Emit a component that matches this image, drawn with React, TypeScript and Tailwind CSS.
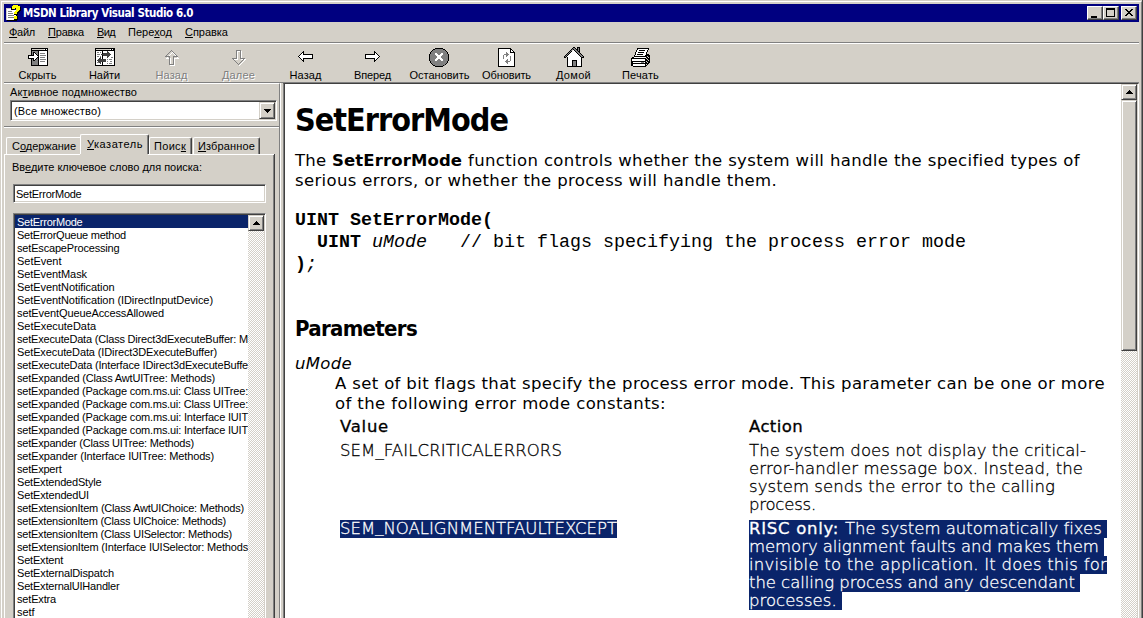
import React, { useLayoutEffect, useRef, useState } from "react";

/** Single line of text whose tracking is adjusted so that it spans `w` pixels. */
function Fit({ w, className = "", children }: { w: number; className?: string; children: React.ReactNode }) {
  const ref = useRef<HTMLSpanElement>(null);
  const [spacing, setSpacing] = useState(0);
  useLayoutEffect(() => {
    const el = ref.current;
    if (!el) return;
    el.style.letterSpacing = "0px";
    const natural = el.getBoundingClientRect().width;
    const count = (el.textContent || "").length;
    const value = (w - natural) / Math.max(1, count);
    el.style.letterSpacing = value + "px";
    setSpacing(value);
  }, [w]);
  return (
    <span ref={ref} className={"inline-block whitespace-pre " + className} style={{ letterSpacing: spacing }}>
      {children}
    </span>
  );
}

const U = ({ children }: { children: React.ReactNode }) => (
  <span className="underline decoration-1 underline-offset-1">{children}</span>
);

const raised =
  "border border-t-[#d4d0c8] border-l-[#d4d0c8] border-r-[#404040] border-b-[#404040] bg-[#d4d0c8] shadow-[inset_1px_1px_0_#fff,inset_-1px_-1px_0_#808080]";
const winButton =
  "border border-t-white border-l-white border-r-[#404040] border-b-[#404040] bg-[#d4d0c8] shadow-[inset_-1px_-1px_0_#808080]";
const sunken =
  "border border-t-[#808080] border-l-[#808080] border-r-white border-b-white bg-white shadow-[inset_1px_1px_0_#404040,inset_-1px_-1px_0_#d4d0c8]";
const track =
  "bg-[repeating-conic-gradient(#ffffff_0_25%,#d4d0c8_0_50%)] bg-[length:2px_2px]";

function Triangle({ up = false }: { up?: boolean }) {
  return (
    <svg width="7" height="4" viewBox="0 0 7 4" shapeRendering="crispEdges">
      {up ? <path d="M3 0h1v1h1v1h1v1h1v1H0V3h1V2h1V1h1z" /> : <path d="M0 0h7v1H6v1H5v1H4v1H3V3H2V2H1V1H0z" />}
    </svg>
  );
}

function Canvas({ children }: { children: React.ReactNode }) {
  return (
    <svg width="22" height="21" viewBox="0 0 22 21" shapeRendering="crispEdges" className="-mt-px mb-px block">
      {children}
    </svg>
  );
}

const arrowLeft = "M3.5 9.5l5-5v3h9v4h-9v3z";

const HideIcon = () => (
  <Canvas>
    <path d="M4 1h17v18H4z" />
    <path d="M5 4h6v14H5z" fill="#808080" />
    <path d="M12 4h8v14h-8z" fill="#fff" />
    <path d="M5 2h12v1H5z" fill="#d4d0c8" />
    <path d="M17 2h1v1h-1zM19 2h1v1h-1z" fill="#fff" />
    <path d="M13 6h5v1h-5zM13 8h6v1h-6zM13 10h5v1h-5zM13 12h6v1h-6zM13 14h5v1h-5z" fill="#808080" />
    <path d="M1.500 8.500h5v-3h1l4 4-4 4h-1v-2h-5z" fill="#fff" stroke="#000" />
  </Canvas>
);

const FindIcon = () => (
  <Canvas>
    <path d="M1 1h20v18H1z" />
    <path d="M2 4h18v14H2z" fill="#fff" />
    <path d="M2 2h14v1H2z" fill="#d4d0c8" />
    <path d="M16 2h1v1h-1zM18 2h1v1h-1z" fill="#fff" />
    <path d="M8 4h1v14H8z" />
    <path d="M3 5h2v1H3zM6 5h1v1H6zM3 7h3v1H3zM3 9h2v1H3zM6 9h1v1H6zM3 15h2v1H3zM6 16h1v1H6zM13 12h1v1h-1zM15 12h3v1h-3zM13 16h1v1h-1zM15 16h3v1h-3zM13 14h1v1h-1zM16 14h2v1h-2zM17 10h2v1h-2z" fill="#808080" />
    <path d="M9 6h4V4h1v1h1v1h1v1h1v1h-1v1h-1v1h-1v1h-1V9H9V8H7V7h2z" fill="#404040" />
    <path d="M3 13h1v-1h1v-1h1v-1h1v2h5v3H7v2H6v-1H5v-1H4v-1H3z" fill="#404040" />
  </Canvas>
);

const UpIcon = () => (
  <Canvas>
    <path d="M11.500 4.500l6 6h-4v7h-4v-7h-4z" fill="none" stroke="#fff" transform="translate(0 1)" />
    <path d="M10.500 3.500l6 6h-4v8h-4v-8h-4z" fill="none" stroke="#808080" />
  </Canvas>
);

const DownIcon = () => (
  <Canvas>
    <path d="M11.500 18.500l6-6h-4v-8h-4v8h-4z" fill="none" stroke="#fff" />
    <path d="M10.500 17.500l6-6h-4v-8h-4v8h-4z" fill="none" stroke="#808080" />
  </Canvas>
);

const LeftIcon = () => (
  <Canvas>
    <path d={arrowLeft} fill="#fff" stroke="#000" />
  </Canvas>
);

const RightIcon = () => (
  <Canvas>
    <path d={arrowLeft} fill="#fff" stroke="#000" transform="translate(21 0) scale(-1 1)" />
  </Canvas>
);

const StopIcon = () => (
  <Canvas>
    <g transform="translate(-1 1)">
      <path d="M8.500 .5h5l3 1 3 3 1 3v4l-1 3-3 3-3 1h-5l-3-1-3-3-1-3v-4l1-3 3-3z" fill="#808080" stroke="#000" />
      <path d="M7 5h2v1h1v1h2V6h1V5h2v2h-1v1h-1v2h1v1h1v2h-2v-1h-1v-1h-2v1H9v1H7v-2h1v-1h1V8H8V7H7z" fill="#fff" />
    </g>
  </Canvas>
);

const RefreshIcon = () => (
  <Canvas>
    <g transform="translate(0 1)">
      <path d="M2.500 .5h12l4 4v14h-16z" fill="#fff" stroke="#000" />
      <path d="M14.500 .5v4h4" fill="none" stroke="#000" />
      <path d="M7 7h1V6h2V4h1v1h1v1h1v1h-1v1h-1v1h-1V7H8v4H7zM14 8h1v5h-1v1h-2v2h-1v-1h-1v-1H9v-1h1v-1h1v-1h1v2h2z" fill="#808080" />
    </g>
  </Canvas>
);

const HomeIcon = () => (
  <Canvas>
    <path d="M14.500 .5h2v8h-2z" fill="#808080" stroke="#000" />
    <path d="M4 9l7-7 7 7v10H4z" fill="#fff" />
    <path d="M4 10h1v9h13v-9h1v10H4z" fill="#000" />
    <path d="M10 0h2v1h1v1h1v1h1v1h1v1h1v1h1v1h1v1h1v1h1v2h-3v-1h-1V9h-1V8h-1V7h-1V6h-1V5h-1V4h-1V3h-2v1H9v1H8v1H7v1H6v1H5v1H4v1H3v1H1V9h1V8h1V7h1V6h1V5h1V4h1V3h1V2h1V1h1z" />
    <path d="M10 1h2v1h1v1h1v1h1v1h1v1h1v1h1v1h1v1h1v1h-2V9h-1V8h-1V7h-1V6h-1V5h-1V4h-1V3h-1V2h-1v1H9v1H8v1H7v1H6v1H5v1H4v1H3v1H2V9h1V8h1V7h1V6h1V5h1V4h1V3h1V2h1z" fill="#808080" />
    <path d="M9.500 19.500v-6h4v6z" fill="#808080" stroke="#000" />
  </Canvas>
);

const PrintIcon = () => (
  <Canvas>
    <path d="M1 11h1v-1h2V9h12V7h3v1h1v8h-1v1h-1v1h-1v1h-1v1H3v-1H1z" />
    <path d="M2 12h13v2H2zM3 15h12v1H3zM3 17h12v2H3z" fill="#fff" />
    <path d="M5 10h11v1H4v-1z" fill="#fff" />
    <path d="M7 1h12v2h-1v2h-1v2h-1v3H4V8h1V5h1V3h1z" />
    <path d="M8 2h10l-3 7H5z" fill="#fff" />
    <path d="M9 3h6v1H9zM8 5h6v1H8zM7 7h6v1H7z" />
    <path d="M17 9h1v1h-1zM16 11h1v1h-1zM18 10h1v1h-1zM17 12h1v1h-1zM18 13h1v1h-1zM16 14h1v1h-1zM17 15h1v1h-1zM16 17h1v1h-1z" fill="#d4d0c8" />
    <path d="M11 15h3v1h-3z" fill="#808080" />
  </Canvas>
);

const AppIcon = () => (
  <svg width="16" height="17" viewBox="0 0 16 17" shapeRendering="crispEdges">
    <path d="M1 4h7v1h2v10H1z" fill="#fff" />
    <path d="M0 3h6v1H1v11H0z" fill="#d4d0c8" />
    <path d="M1 15h9v1H1zM10 9h1v7h-1z" fill="#000" />
    <path d="M2 6h4v1H2zM2 8h5v1H2zM2 10h6v1H2zM2 12h6v1H2z" fill="#808080" />
    <path d="M6 1h1V0h6v1h1v1h1v4h-1v1h-1v1h-1v2H8V7h1V6h1V4H8v1H5V2h1zM8 11h4v4H8z" fill="#000" />
    <path d="M7 0h5v1h2v4h-1v1h-1v1h-1v2H8V7h1V6h1V3H9v1H6V1h1zM8 11h3v3H8z" fill="#ff0" />
  </svg>
);

const tools: { label: string; w: number; icon: React.ReactNode; off?: boolean }[] = [
  { label: "Скрыть", w: 38, icon: <HideIcon /> },
  { label: "Найти", w: 31, icon: <FindIcon /> },
  { label: "Назад", w: 32, icon: <UpIcon />, off: true },
  { label: "Далее", w: 33, icon: <DownIcon />, off: true },
  { label: "Назад", w: 32, icon: <LeftIcon /> },
  { label: "Вперед", w: 37, icon: <RightIcon /> },
  { label: "Остановить", w: 60, icon: <StopIcon /> },
  { label: "Обновить", w: 49, icon: <RefreshIcon /> },
  { label: "Домой", w: 35, icon: <HomeIcon /> },
  { label: "Печать", w: 37, icon: <PrintIcon /> },
];

const keywords: [string, number][] = [
  ["SetErrorMode", 65.5],
  ["SetErrorQueue method", 109],
  ["setEscapeProcessing", 102.5],
  ["SetEvent", 44.5],
  ["SetEventMask", 70],
  ["SetEventNotification", 97.5],
  ["SetEventNotification (IDirectInputDevice)", 196],
  ["setEventQueueAccessAllowed", 147],
  ["SetExecuteData", 79],
  ["setExecuteData (Class Direct3dExecuteBuffer: M", 231],
  ["SetExecuteData (IDirect3DExecuteBuffer)", 200],
  ["setExecuteData (Interface IDirect3dExecuteBuffe", 231],
  ["setExpanded (Class AwtUITree: Methods)", 198],
  ["setExpanded (Package com.ms.ui: Class UITree:", 231],
  ["setExpanded (Package com.ms.ui: Class UITree:", 231],
  ["setExpanded (Package com.ms.ui: Interface IUIT", 231],
  ["setExpanded (Package com.ms.ui: Interface IUIT", 231],
  ["setExpander (Class UITree: Methods)", 177],
  ["setExpander (Interface IUITree: Methods)", 197],
  ["setExpert", 44.5],
  ["SetExtendedStyle", 84.5],
  ["SetExtendedUI", 72],
  ["setExtensionItem (Class AwtUIChoice: Methods)", 227],
  ["setExtensionItem (Class UIChoice: Methods)", 209],
  ["setExtensionItem (Class UISelector: Methods)", 215],
  ["setExtensionItem (Interface IUISelector: Methods", 231],
  ["SetExtent", 46],
  ["SetExternalDispatch", 97],
  ["SetExternalUIHandler", 102.5],
  ["setExtra", 39],
  ["setf", 17.5],
];

function TitleBar() {
  return (
    <div className="flex h-[18px] shrink-0 items-center bg-[#000080] pl-0.5 pr-0.5">
      <AppIcon />
      <Fit w={170} className="ml-[1px] pt-px font-['DejaVu_Sans_Condensed','DejaVu_Sans',sans-serif] text-[11.500px] font-bold leading-[17px] text-white">
        MSDN Library Visual Studio 6.0
      </Fit>
      <div className="ml-auto flex">
        <div className={"h-3.5 w-4 " + winButton}>
          <svg width="14" height="12" shapeRendering="crispEdges"><path d="M3 9h6v2H3z" /></svg>
        </div>
        <div className={"h-3.5 w-4 " + winButton}>
          <svg width="14" height="12" shapeRendering="crispEdges"><path fillRule="evenodd" d="M2 1h9v9H2zM3 3v6h7V3z" /></svg>
        </div>
        <div className={"ml-0.5 h-3.5 w-4 " + winButton}>
          <svg width="14" height="12" shapeRendering="crispEdges">
            <path d="M3 2h2v1h1v1h2V3h1V2h2v1h-1v1H9v1H8v1h1v1h1v1h1v1H9V8H8V7H6v1H5v1H3V8h1V7h1V6h1V5H5V4H4V3H3z" />
          </svg>
        </div>
      </div>
    </div>
  );
}

function MenuBar() {
  return (
    <div className="flex h-5 shrink-0 items-center gap-[13px] pl-[5px]">
      <Fit w={26}><U>Ф</U>айл</Fit>
      <Fit w={36}><U>П</U>равка</Fit>
      <Fit w={18}><U>В</U>ид</Fit>
      <Fit w={44}>Пере<U>х</U>од</Fit>
      <Fit w={43}><U>С</U>правка</Fit>
    </div>
  );
}

function Toolbar() {
  return (
    <div className="flex h-[39px] shrink-0 border-t border-t-white">
      {tools.map((t, i) => (
        <div key={i} className="flex w-[67px] flex-col items-center pt-1">
          {t.icon}
          <Fit w={t.w} className={"leading-[13px] " + (t.off ? "text-[#808080] [text-shadow:1px_1px_0_#fff]" : "")}>
            {t.label}
          </Fit>
        </div>
      ))}
    </div>
  );
}

const tabEdge =
  "flex items-center rounded-t-[2px] border-t border-l border-t-white border-l-white border-r border-r-[#404040] shadow-[inset_-1px_0_0_#808080] bg-[#d4d0c8]";

function Sidebar() {
  return (
    <div className="flex w-[276px] shrink-0 flex-col border-t border-t-white border-r border-r-[#808080]">
      <div className="h-4 shrink-0 pl-1.5 leading-4">
        <Fit w={127}>Ак<U>т</U>ивное подмножество</Fit>
      </div>
      <div className={"ml-1.5 flex h-[21px] w-[267px] shrink-0 items-center justify-between pl-[3px] pr-px " + sunken}>
        <Fit w={87} className="pt-px">(Все множество)</Fit>
        <div className={"flex h-[17px] w-4 items-center justify-center " + raised}>
          <Triangle />
        </div>
      </div>
      <div className="mt-[5px] h-0.5 shrink-0 border-t border-b border-t-[#808080] border-b-white" />
      <div className="flex h-[26px] shrink-0 items-end pl-0.5">
        <div className="flex h-[17px] w-[74px] items-center rounded-tl-[2px] border-t border-l border-t-white border-l-white pl-[5px]">
          <Fit w={64}>С<U>о</U>держание</Fit>
        </div>
        <div className={"h-[20px] w-[69px] pl-1.5 " + tabEdge}>
          <Fit w={56}><U>У</U>казатель</Fit>
        </div>
        <div className={"h-[17px] w-[43px] pl-1 " + tabEdge}>
          <Fit w={32}>Поис<U>к</U></Fit>
        </div>
        <div className={"ml-px h-[17px] w-[67px] pl-1 " + tabEdge}>
          <Fit w={57}><U>И</U>збранное</Fit>
        </div>
      </div>
      <div className="flex w-[271px] grow flex-col border-l border-l-white border-r border-r-[#404040] shadow-[inset_-1px_0_0_#808080]">
        <div className="flex shrink-0">
          <div className="h-px w-[75px] bg-white" />
          <div className="ml-[68px] h-px grow bg-white" />
        </div>
        <div className="mt-1.5 h-[15px] shrink-0 pl-[7px] leading-[13px]">
          <Fit w={190}>Вв<U>е</U>дите ключевое слово для поиска:</Fit>
        </div>
        <div className={"ml-2 mt-2 flex h-[19px] w-[253px] shrink-0 items-center pl-0.5 " + sunken}>
          <Fit w={65.5} className="pt-px">SetErrorMode</Fit>
        </div>
        <div className={"ml-2 mt-2.5 flex h-[420px] w-[253px] shrink-0 p-px " + sunken}>
          <div className="w-[233px] overflow-hidden">
            {keywords.map(([text, w], i) => (
              <div key={i} className={"h-[13px] pl-0.5 leading-[15px] " + (i === 0 ? "bg-[#0a246a] text-white" : "")}>
                <Fit w={w}>{text}</Fit>
              </div>
            ))}
          </div>
          <div className={"w-4 " + track}>
            <div className={"flex h-4 items-center justify-center " + raised}>
              <Triangle up />
            </div>
          </div>
        </div>
      </div>
    </div>
  );
}

const thin = "text-[16.5px] font-extralight [-webkit-text-stroke:0.3px_currentColor]";

function Selected({ w, children }: { w: number; children: React.ReactNode }) {
  return <Fit w={w} className="block w-fit bg-[#0a246a] text-white">{children}</Fit>;
}

function Article() {
  return (
    <div className="grow pl-2.5 font-['DejaVu_Sans',sans-serif] text-[16.5px] leading-5">
      <h1 className="mt-[16px] h-10 font-['DejaVu_Sans_Condensed','DejaVu_Sans',sans-serif] text-[32px] font-bold leading-10">
        <Fit w={213}>SetErrorMode</Fit>
      </h1>
      <div className="mt-[11px] flex flex-col items-start">
        <Fit w={785}>
          <Fit w={37}>The </Fit>
          <Fit w={136}><b>SetErrorMode </b></Fit>
          <Fit w={612}>function controls whether the system will handle the specified types of</Fit>
        </Fit>
        <Fit w={482}>serious errors, or whether the process will handle them.</Fit>
      </div>
      <pre className="mt-[19px] font-['Liberation_Mono',monospace] text-[18.33px] leading-[22px]">
        <b>{"UINT SetErrorMode("}</b>
        {"\n  "}
        <b>UINT</b> <i>uMode</i>
        {"   // bit flags specifying the process error mode\n"}
        <b>)</b>
        <i>;</i>
      </pre>
      <h2 className="mt-[39px] h-7 font-['DejaVu_Sans_Condensed','DejaVu_Sans',sans-serif] text-[22px] font-bold leading-7">
        <Fit w={122}>Parameters</Fit>
      </h2>
      <div className="mt-[11px] flex flex-col items-start">
        <Fit w={57} className="italic">uMode</Fit>
        <div className="flex flex-col items-start pl-10">
          <Fit w={770}>A set of bit flags that specify the process error mode. This parameter can be one or more</Fit>
          <Fit w={331}>of the following error mode constants:</Fit>
        </div>
      </div>
      <div className="ml-[45px] mt-1 grid grid-cols-[409px_1fr] leading-[18px]">
        <div className="h-6 [-webkit-text-stroke:0.3px_#000]"><Fit w={49}>Value</Fit></div>
        <div className="h-6 [-webkit-text-stroke:0.3px_#000]"><Fit w={54}>Action</Fit></div>
        <div className={thin}><Fit w={222}>SEM_FAILCRITICALERRORS</Fit></div>
        <div className={"flex h-[78px] flex-col items-start " + thin}>
          <Fit w={337}>The system does not display the critical-</Fit>
          <Fit w={334}>error-handler message box. Instead, the</Fit>
          <Fit w={306}>system sends the error to the calling</Fit>
          <Fit w={67}>process.</Fit>
        </div>
        <div className={thin}>
          <Selected w={277}>SEM<span className="relative -top-0.5">_</span>NOALIGNMENTFAULTEXCEPT</Selected>
        </div>
        <div className={"flex flex-col items-start " + thin}>
          <div className="flex">
            <Selected w={96}><span className="font-normal">RISC only: </span></Selected>
            <Selected w={262}>The system automatically fixes </Selected>
          </div>
          <Selected w={355}>memory alignment faults and makes them </Selected>
          <Selected w={358}>invisible to the application. It does this for</Selected>
          <Selected w={331}>the calling process and any descendant </Selected>
          <Selected w={93}>processes. </Selected>
        </div>
      </div>
    </div>
  );
}

export default function App() {
  return (
    <div className="flex h-[618px] w-[1143px] overflow-hidden border-r border-r-[#404040] bg-[#d4d0c8] font-['Liberation_Sans',Arial,sans-serif] text-[11px] text-black">
      <div className="ml-px mt-px flex w-[1141px] flex-col border-t border-l border-r border-t-white border-l-white border-r-[#808080] pl-0.5 pr-0.5 pt-0.5">
        <TitleBar />
        <MenuBar />
        <div className="h-px shrink-0 bg-[#808080]" />
        <Toolbar />
        <div className="h-px shrink-0 bg-[#808080]" />
        <div className="flex min-h-0 grow overflow-hidden">
          <Sidebar />
          <div className="w-[3px] shrink-0 border-l border-l-white" />
          <div className="flex grow border-t border-t-[#404040] border-l border-l-[#808080] border-r border-r-white bg-white">
            <div className="w-px shrink-0 bg-[#404040]" />
            <Article />
            <div className={"w-4 shrink-0 " + track}>
              <div className={"flex h-4 items-center justify-center " + raised}>
                <Triangle up />
              </div>
              <div className={"h-[251px] " + raised} />
            </div>
            <div className="w-px shrink-0 bg-[#d4d0c8]" />
          </div>
        </div>
      </div>
    </div>
  );
}
